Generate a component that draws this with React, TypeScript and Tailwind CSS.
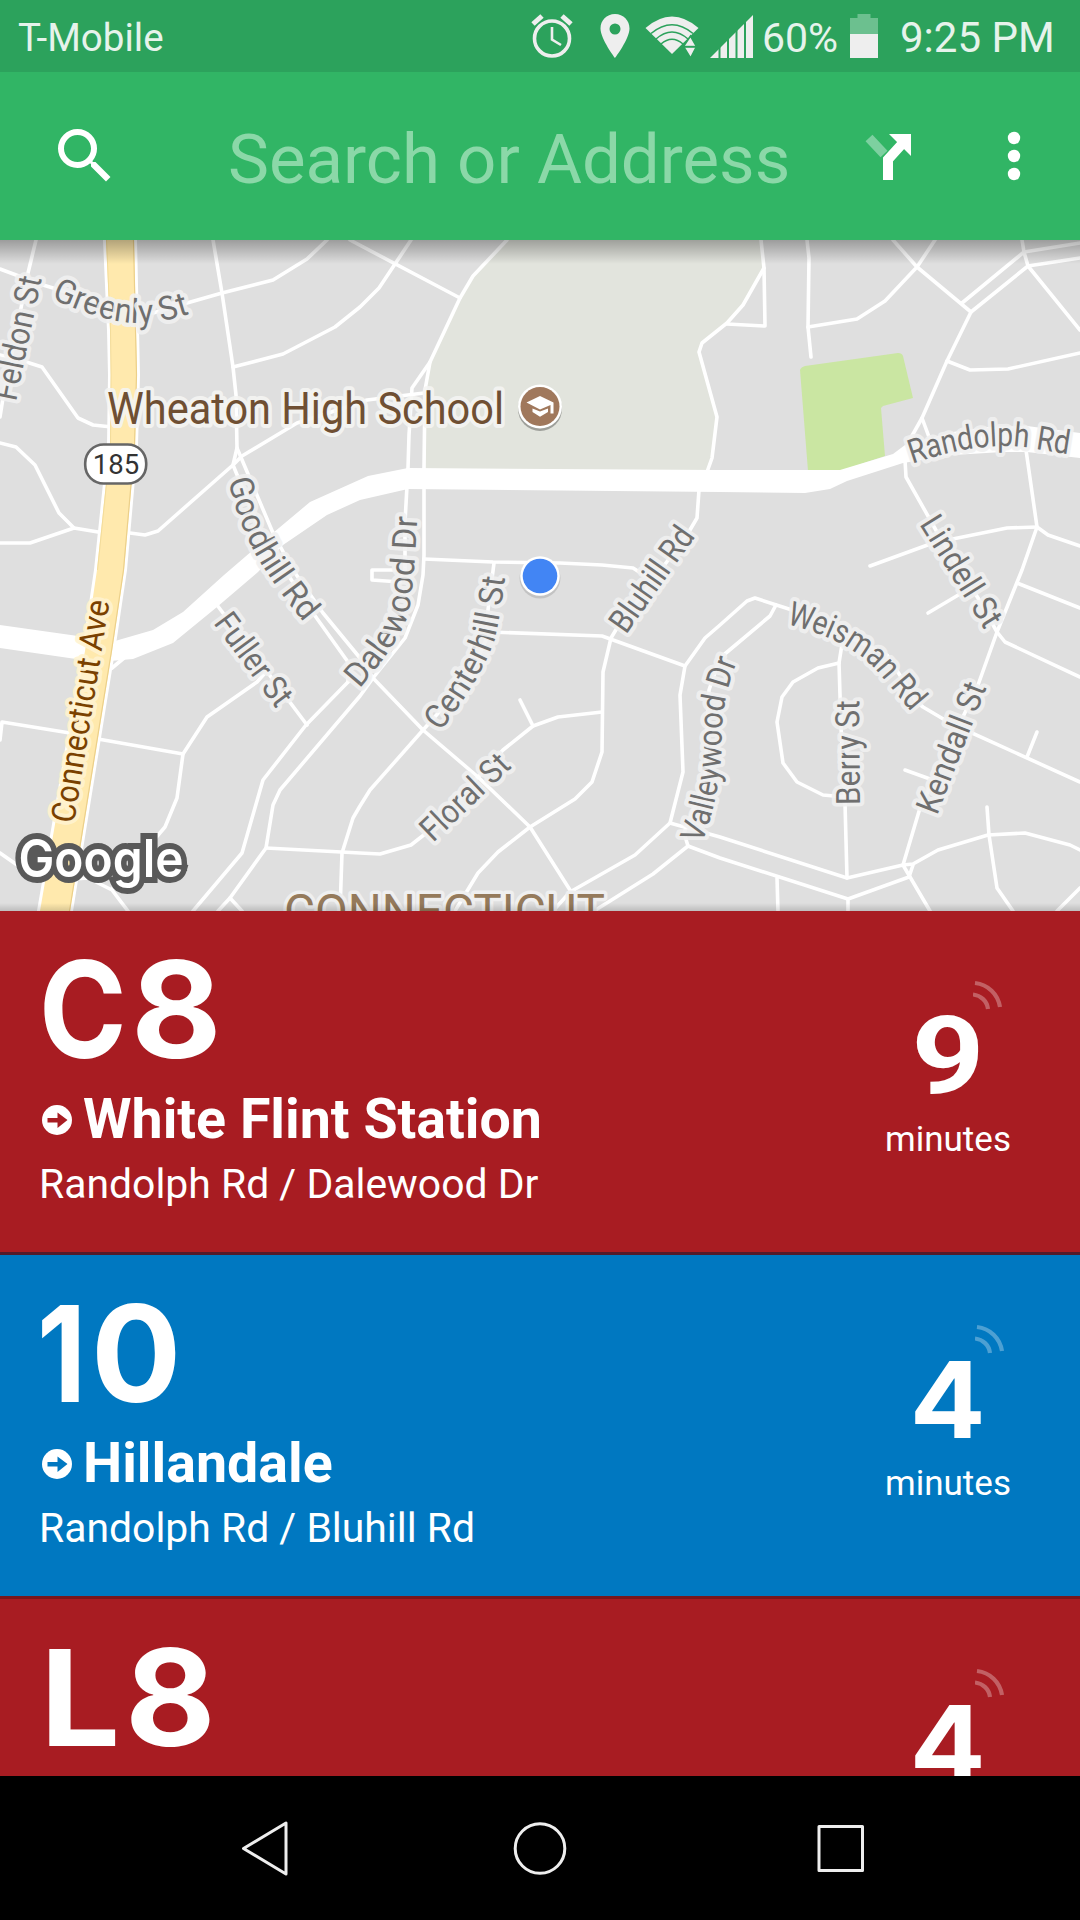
import React from "react";
import { MdSearch } from "react-icons/md";

const minorRoads = [
  "M36 240L28 273L3 398L0 417",
  "M0 269L43 285L110 305L153 313L187 303L222 293L273 280L307 259L327 240",
  "M213 240L222 293L233 367L236 395L237 448L273 533",
  "M237 448L233 465L240 482L262 535L313 613L348 662L348 682",
  "M233 367L283 354L335 327L360 307L379 288L395 264L411 240",
  "M0 355L20 360L42 367L78 418L93 425L112 427",
  "M0 443L16 447L35 465L59 513L74 528L104 533",
  "M0 543L30 543L74 528",
  "M130 533L145 535L158 531L233 465L242 456L297 423L347 407L367 400L424 393",
  "M507 240L473 276L460 298L430 362L412 388L409 435L408 468L405 522L405 572",
  "M350 240L460 298",
  "M430 362L425 390L424 468L424 555L423 575L418 605L405 638L373 678L360 696L280 790L273 805L266 848L230 898L218 911",
  "M395 570L372 570L372 580L400 582",
  "M761 240L764 268L743 305L727 323L702 343L699 352L717 417L712 458L707 472",
  "M764 268L765 326L727 324",
  "M807 240L809 258L808 327L811 357",
  "M808 327L857 319L885 301L917 267L935 240",
  "M893 240L917 267L971 312L947 361L922 418L908 443",
  "M922 418L929 437",
  "M1022 240L1024 252L1028 266L1080 330",
  "M1080 243L1024 252L962 303",
  "M1080 258L1028 266L971 312",
  "M947 361L970 370L1008 369L1080 353",
  "M905 460L906 477L937 532L978 598L997 632L1005 642L1080 677",
  "M870 566L933 543L1007 528L1037 527",
  "M1026 450L1037 527L1048 535L1080 546",
  "M1037 527L1022 570L997 632L978 685L920 808L903 865L930 911",
  "M1017 583L1080 608",
  "M928 613L960 594",
  "M905 770L930 779",
  "M293 570L323 613L360 658L373 678L423 730L478 777L530 827L570 890",
  "M273 533L293 570",
  "M348 682L306 725L263 780L242 853L193 911",
  "M230 898L242 911",
  "M217 605L307 725",
  "M265 673L257 682L207 717L183 754L177 798L165 827L113 888",
  "M0 740L2 722L70 733M98 739L183 754",
  "M0 853L20 867L60 880L88 878L112 890L128 911",
  "M112 668L124 658",
  "M266 848L360 853L380 854L411 845L425 834L503 750L533 726L558 717L602 712",
  "M520 700L533 726",
  "M340 911L342 853L353 818L360 806L370 790L423 730L468 680L486 640L488 610L494 563",
  "M424 559L493 562L560 563L602 565L633 568L647 577",
  "M699 490L697 518L687 535L617 628L611 638L603 672L602 752L592 782L575 799L530 827L498 852L478 873L455 911",
  "M490 632L602 636L685 666",
  "M553 911L570 892L635 855L670 823L683 772L680 695L685 666L705 638L720 625L747 601L755 598L792 610L843 634L887 655L917 702L923 707L950 723L1080 782",
  "M670 823L720 837L847 878L903 865L913 864L938 850L988 835L1025 833L1070 845L1080 850",
  "M594 911L653 874L688 846L720 858L848 899L909 877L913 865",
  "M688 846L684 833L705 780L709 690L720 658L770 616L776 605",
  "M1027 757L1037 732",
  "M843 638L839 663L841 727L845 803L847 878",
  "M839 663L818 668L793 682L782 697L777 722L783 763L797 782L823 795L845 797",
  "M777 878L778 911M848 899L848 911",
  "M987 807L989 835L997 888L1013 911M1080 888L1057 911",
];

type Label = { id: string; text: string; d: string; len: number; halo?: string; fill?: string };

const labels: Label[] = [
  { id: "feldon", text: "Feldon St", d: "M16 402L46 258", len: 126 },
  { id: "greenly", text: "Greenly St", d: "M51 298C80 312 110 322 135 323S175 318 206 309", len: 144 },
  { id: "goodhill", text: "Goodhill Rd", d: "M228 480Q240 530 262 565T314 634", len: 163 },
  { id: "fuller", text: "Fuller St", d: "M213 623L289 726", len: 107 },
  { id: "connecticut", text: "Connecticut Ave", d: "M74 824L113 580", len: 225, fill: "#7a4100", halo: "#fff3d0" },
  { id: "dalewood", text: "Dalewood Dr", d: "M359 689Q398 645 408 615Q414 595 418 500", len: 188 },
  { id: "centerhill", text: "Centerhill St", d: "M440 732Q479 682 494 642Q501 618 508 550", len: 171 },
  { id: "floral", text: "Floral St", d: "M433 843L530 750", len: 110 },
  { id: "bluhill", text: "Bluhill Rd", d: "M626 635L710 516", len: 121 },
  { id: "randolph", text: "Randolph Rd", d: "M912 464Q975 442 1023 447L1080 456", len: 159 },
  { id: "lindell", text: "Lindell St", d: "M919 524L997 650", len: 125 },
  { id: "weisman", text: "Weisman Rd", d: "M786 624Q850 640 878 672L930 734", len: 157 },
  { id: "berry", text: "Berry St", d: "M860 805L859 680", len: 105 },
  { id: "kendall", text: "Kendall St", d: "M937 816L998 658", len: 138 },
  { id: "valleywood", text: "Valleywood Dr", d: "M702 844Q720 795 722 745Q720 700 740 655", len: 187 },
];

function StreetMap() {
  return (
    <svg className="block h-full w-full" viewBox="0 240 1080 671" fontFamily="Roboto, sans-serif">
      <rect x="0" y="240" width="1080" height="671" fill="#dfdfdf" />
      <path
        d="M507 240L473 276L430 362L424 390V470H707L712 458L717 417L699 352L702 343L727 323L743 305L764 268L761 240Z"
        fill="#e2e4dd"
      />
      <path
        d="M800 370Q801 367 805 366L898 353Q902 353 903 356L913 398L883 406L881 408L885 456L840 471H808Z"
        fill="#cae6a2"
      />
      <g fill="none" stroke="#fff" strokeWidth="3.6" strokeLinejoin="round" strokeLinecap="round">
        {minorRoads.map((d) => (
          <path key={d} d={d} />
        ))}
      </g>
      <path
        d="M0 625L85 637L115 641L153 630L183 612L224 575L273 533L310 502L368 476L408 468L720 470H840L893 454L905 445L953 432L987 427L1027 426L1080 433V458L1027 452L1003 452L953 455L903 463L847 481L830 489L805 493L720 492L408 489L360 500L327 515L283 545L258 572L217 607L173 643L133 659L110 661L83 660L0 648Z"
        fill="#fff"
      />
      <path
        d="M106 240L110 330L111 375L110 445L97 570L85 651L40 911H70L112 651L124 570L135 445L137 375L136 330L134 240Z"
        fill="#ffe9ad"
        stroke="#fff"
        strokeWidth="6"
        paintOrder="stroke"
      />
      <path d="M133.500 240L135.500 330L136.500 375L134.500 445L123.500 570L111.500 651L69.500 911" fill="none" stroke="#ecd08a" strokeWidth="1.200" />
      <path d="M106.500 240L110.500 330L111 375L110.500 445L97.500 570" fill="none" stroke="#f3dc9a" strokeWidth="1" />

      <g fontSize="33.500" strokeWidth="8.500" strokeLinejoin="round" paintOrder="stroke">
        {labels.map((l) => (
          <g key={l.id}>
            <path id={l.id} d={l.d} fill="none" stroke="none" />
            <text fill={l.fill ?? "#6f6f6f"} stroke={l.halo ?? "#f1f1f1"} strokeOpacity="0.9">
              <textPath href={"#" + l.id} textLength={l.len} lengthAdjust="spacingAndGlyphs">
                {l.text}
              </textPath>
            </text>
          </g>
        ))}
      </g>

      <text x="107" y="423.500" fontSize="45" textLength="397" lengthAdjust="spacingAndGlyphs" fill="#6f4f33" stroke="#f5f5f3" strokeWidth="8" strokeOpacity="0.9" strokeLinejoin="round" paintOrder="stroke">
        Wheaton High School
      </text>
      <text x="284" y="928" fontSize="48" textLength="321" lengthAdjust="spacingAndGlyphs" fill="#957a5b" stroke="#efefef" strokeWidth="7" strokeLinejoin="round" paintOrder="stroke">
        CONNECTICUT
      </text>

      <rect x="85.200" y="444.500" width="61" height="39" rx="18.500" fill="#fff" stroke="#666" strokeWidth="2.600" />
      <text x="116" y="473.500" fontSize="27.500" textAnchor="middle" fill="#333">
        185
      </text>

      <circle cx="540" cy="409" r="22" fill="#000" opacity="0.300" />
      <circle cx="540" cy="406.500" r="22" fill="#fff" />
      <circle cx="540" cy="406.500" r="19.500" fill="#a0785c" />
      <path d="M526.500 402.500L540 396L553.500 402.500V413.500H550.500V405L540 409.500Z" fill="#fff" />
      <path d="M532.500 408.500L540 411.500L548 408.500V412L540 416.800L532.500 412Z" fill="#fff" />

      <circle cx="540" cy="578" r="20.500" fill="#000" opacity="0.120" />
      <circle cx="540" cy="576" r="19.800" fill="#fff" />
      <circle cx="540" cy="576" r="17.300" fill="#4285f4" />

      <text x="18.500" y="876.500" fontFamily="Inter, sans-serif" fontWeight="600" fontSize="52" textLength="165" lengthAdjust="spacingAndGlyphs" fill="#fff" stroke="#595959" strokeWidth="12" paintOrder="stroke">
        Google
      </text>
    </svg>
  );
}

function AlarmIcon() {
  return (
    <svg className="block" width="44" height="44" viewBox="0 0 44 44" fill="none" stroke="#eee">
      <circle cx="22" cy="24.500" r="17.500" strokeWidth="3.600" />
      <path d="M3 10L12 2M41 10L32 2" strokeWidth="5" />
      <path d="M22 13V25.500L31 31" strokeWidth="2.600" />
    </svg>
  );
}

function PinIcon() {
  return (
    <svg className="block" width="54" height="44" viewBox="0 0 54 44">
      <path
        d="M26 0C17.500 0 11.500 6.500 11.500 14.500C11.500 25 26 44 26 44S40.500 25 40.500 14.500C40.500 6.500 34.500 0 26 0ZM26 20.500A5.500 5.500 0 1 1 26 9.500A5.500 5.500 0 0 1 26 20.500Z"
        fill="#eee"
      />
    </svg>
  );
}

function WifiIcon() {
  return (
    <svg className="block" width="54" height="43" viewBox="0 0 54 43">
      <path d="M0.500 13Q27 -10 53.500 13L27 39Z" fill="#eee" />
      <g fill="none" stroke="#2ca25c" strokeWidth="1.600">
        <path d="M6 18.500Q27 1 48 18.500" />
        <path d="M11 24Q27 10 43 24" />
        <path d="M16 29Q27 19.500 38 29" />
      </g>
      <path d="M45.500 21L51.500 31.500L45.500 43L38.500 31.500Z" fill="#eee" stroke="#2ca25c" strokeWidth="1.600" />
      <path d="M38 31.800H53" stroke="#2ca25c" strokeWidth="2" />
    </svg>
  );
}

function SignalIcon() {
  return (
    <svg className="block" width="43" height="43" viewBox="0 0 43 43">
      <path d="M0 43L43 0V43Z" fill="#eee" />
      <path d="M9.500 25V43M18 18V43M26.500 10V43M35 0V43" stroke="#2ca25c" strokeWidth="2" />
    </svg>
  );
}

function BatteryIcon() {
  return (
    <svg className="block" width="28" height="44" viewBox="0 0 28 44">
      <path d="M0 4H7.500V0H20.500V4H28V20H0Z" fill="#6cc08f" />
      <path d="M0 20H28V44H0Z" fill="#eee" />
    </svg>
  );
}

function StatusBar() {
  return (
    <div className="flex h-[72px] items-center bg-[#2ca25c] text-[#e6f3eb]">
      <span className="ml-[18px] mt-[3px] text-[38.500px] leading-[46px]">T-Mobile</span>
      <div className="ml-auto flex items-center">
        <AlarmIcon />
        <div className="ml-[15px]">
          <PinIcon />
        </div>
        <div className="ml-[2px]">
          <WifiIcon />
        </div>
        <div className="ml-[11px]">
          <SignalIcon />
        </div>
        <span className="ml-[9px] mt-[3px] w-[78px] whitespace-nowrap text-[41px] leading-[46px]">60%</span>
        <div className="ml-[10px]">
          <BatteryIcon />
        </div>
        <span className="ml-[22px] mt-[3px] w-[180px] whitespace-nowrap text-[42px] leading-[46px]">9:25 PM</span>
      </div>
    </div>
  );
}

function Toolbar() {
  return (
    <div className="flex h-[168px] items-center bg-[#31b565]">
      <MdSearch className="ml-[49px] h-[72px] w-[72px] text-white" />
      <span className="ml-[107px] mt-[7px] w-[599px] whitespace-nowrap text-[69px] leading-[80px] text-[#8bd8a8]">
        Search or Address
      </span>
      <svg className="ml-[37px] mt-[2px] block" width="48" height="48" viewBox="0 0 48 48">
        <path d="M5 5L20 21" stroke="#7dd0a0" strokeWidth="9.500" fill="none" />
        <path d="M24 47V26.500L38 11" stroke="#fff" strokeWidth="10" fill="none" />
        <path d="M25 1H47V23Z" fill="#fff" />
      </svg>
      <svg className="ml-[94px] block" width="16" height="50" viewBox="0 0 16 50" fill="#fff">
        <circle cx="8" cy="7" r="6.200" />
        <circle cx="8" cy="25" r="6.200" />
        <circle cx="8" cy="43" r="6.200" />
      </svg>
    </div>
  );
}

function Glyph({ className, children }: { className: string; children: string }) {
  return <span className={"inline-block origin-left " + className}>{children}</span>;
}

type RouteCardProps = {
  route: React.ReactNode;
  dest?: string;
  stop?: string;
  minutes: React.ReactNode;
  surface: string;
  accent: string;
  signal: string;
};

function RouteCard({ route, dest, stop, minutes, surface, accent, signal }: RouteCardProps) {
  return (
    <div className={"flex h-[344px] shrink-0 border-b-[3px] text-white " + surface}>
      <div className="flex flex-1 flex-col pl-[39px] pt-[38px]">
        <div className="flex h-[120px] whitespace-nowrap font-[Inter] text-[134px] font-bold leading-[120px]">{route}</div>
        {dest && (
          <div className="mt-[19px] flex h-[64px] items-center pl-[3px]">
            <svg className={"block " + accent} width="30" height="30" viewBox="0 0 30 30">
              <circle cx="15" cy="15" r="15" fill="#fff" />
              <path d="M5.500 13H15.500V7.500L25.500 15L15.500 23V17.500H5.500Z" fill="currentColor" />
            </svg>
            <span className="ml-[11px] whitespace-nowrap text-[55.500px] font-bold leading-[64px]">{dest}</span>
          </div>
        )}
        {stop && <div className="mt-[7px] whitespace-nowrap text-[40.900px] leading-[50px]">{stop}</div>}
      </div>
      <div className="relative w-[264px] pt-[105px] text-center">
        <svg className={"absolute top-[69px] " + signal} width="30" height="32" viewBox="0 0 30 32" fill="none" stroke="#fff" strokeOpacity="0.300" strokeWidth="4.200">
          <path d="M2 3C15 4.500 25 14 27 27" />
          <path d="M0 14.500C8 15.500 14 21 15 29" />
        </svg>
        <div className="h-[80px] leading-[80px]">{minutes}</div>
        <div className="mt-[24px] text-[35px] leading-[40px]">minutes</div>
      </div>
    </div>
  );
}

const red = "bg-[#a81c22] border-[#541a2a]";
const blue = "bg-[#0078c1] border-[#7a161c]";

const nine = <span className="inline-block scale-x-[1.18] text-[108px] font-bold">9</span>;
const four = <span className="inline-block scale-x-[1.06] font-[Inter] text-[106px] font-bold">4</span>;

export default function App() {
  return (
    <div className="flex h-[1920px] w-[1080px] flex-col overflow-hidden bg-black font-[Roboto]">
      <StatusBar />
      <Toolbar />
      <div className="relative h-[671px] shrink-0">
        <StreetMap />
        <div className="absolute inset-x-0 top-0 h-[24px] bg-linear-to-b from-black/30 to-transparent" />
        <div className="absolute inset-x-0 bottom-0 h-[8px] bg-linear-to-t from-black/15 to-transparent" />
      </div>
      <div className="flex h-[865px] shrink-0 flex-col overflow-hidden">
        <RouteCard
          route={
            <>
              <Glyph className="w-[92px] scale-x-[0.885]">C</Glyph>
              <Glyph className="scale-x-[1.04]">8</Glyph>
            </>
          }
          dest="White Flint Station"
          stop="Randolph Rd / Dalewood Dr"
          minutes={nine}
          surface={red}
          accent="text-[#a81c22]"
          signal="left-[157px]"
        />
        <RouteCard
          route={
            <>
              <Glyph className="-ml-[2px] w-[54px] scale-x-[0.85]">1</Glyph>
              <Glyph className="scale-x-[1]">0</Glyph>
            </>
          }
          dest="Hillandale"
          stop="Randolph Rd / Bluhill Rd"
          minutes={four}
          surface={blue}
          accent="text-[#0078c1]"
          signal="left-[159px]"
        />
        <RouteCard
          route={
            <>
              <Glyph className="ml-[1px] w-[85px] scale-x-[1.06]">L</Glyph>
              <Glyph className="scale-x-[1.04]">8</Glyph>
            </>
          }
          minutes={four}
          surface={red}
          accent="text-[#a81c22]"
          signal="left-[159px]"
        />
      </div>
      <div className="flex h-[144px] shrink-0 items-center bg-black">
        <svg className="block" width="1080" height="144" viewBox="0 0 1080 144" fill="none" stroke="#eee" strokeWidth="3" strokeLinejoin="round">
          <path d="M243.500 72.500L286 47V98Z" />
          <circle cx="540" cy="72.500" r="24.800" />
          <rect x="819" y="50.500" width="43.500" height="44" />
        </svg>
      </div>
    </div>
  );
}
